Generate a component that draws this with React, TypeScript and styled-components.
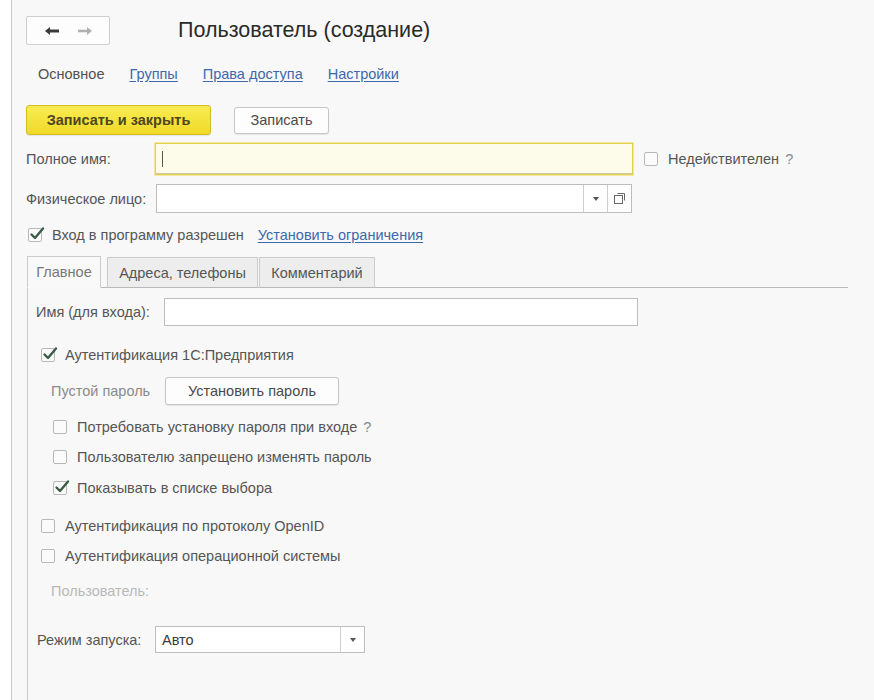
import React from "react";
import styled, { createGlobalStyle } from "styled-components";

const Global = createGlobalStyle`
  html, body { margin: 0; padding: 0; background: #ffffff; }
  body { font-family: "Liberation Sans", Arial, sans-serif; color: #4a4a4a; }
  * { box-sizing: border-box; }
`;

const Page = styled.div`
  padding-left: 11px;
  height: 700px;
  overflow: hidden;
`;

const Frame = styled.div`
  border-left: 1px solid #c9c9c9;
  background: #f8f8f8;
  height: 700px;
  padding: 16px 0 0 14px;
  display: flex;
  flex-direction: column;
`;

const Header = styled.div`
  display: flex;
  align-items: center;
  height: 29px;
`;

const NavBox = styled.div`
  width: 84px;
  height: 29px;
  border: 1px solid #cfcfcf;
  border-radius: 2px;
  background: #fdfdfd;
  display: flex;
  align-items: center;
  justify-content: space-around;
  padding: 0 8px;
`;

const Title = styled.h1`
  margin: 0 0 0 68px;
  font-size: 21.5px;
  font-weight: normal;
  color: #2a2a2a;
`;

const SectionNav = styled.nav`
  display: flex;
  gap: 25px;
  margin: 19px 0 0 12px;
  font-size: 14.5px;
  height: 20px;
  align-items: center;
`;

const NavItem = styled.span<{ $link?: boolean }>`
  color: ${(p) => (p.$link ? "#3d68ac" : "#505050")};
  text-decoration: ${(p) => (p.$link ? "underline" : "none")};
  text-underline-offset: 2px;
`;

const ButtonRow = styled.div`
  display: flex;
  align-items: center;
  gap: 23px;
  margin-top: 21px;
`;

const Button = styled.div<{ $primary?: boolean; $w: number; $h: number }>`
  width: ${(p) => p.$w}px;
  height: ${(p) => p.$h}px;
  flex: none;
  display: flex;
  align-items: center;
  justify-content: center;
  font-size: 14.5px;
  font-weight: ${(p) => (p.$primary ? "bold" : "normal")};
  border-radius: 3px;
  color: ${(p) => (p.$primary ? "#4e4620" : "#4a4a4a")};
  background: ${(p) => (p.$primary ? "linear-gradient(#f9ec52, #f0da28)" : "#fdfdfd")};
  border: 1px solid ${(p) => (p.$primary ? "#d3bd22" : "#c6c6c6")};
  box-shadow: 0 1px 1px rgba(0, 0, 0, 0.08);
`;

const FieldRow = styled.div<{ $mt: number; $ml?: number }>`
  display: flex;
  align-items: center;
  margin-top: ${(p) => p.$mt}px;
  margin-left: ${(p) => p.$ml ?? 0}px;
`;

const Label = styled.span<{ $w: number; $muted?: boolean }>`
  width: ${(p) => p.$w}px;
  flex: none;
  font-size: 14.5px;
  color: ${(p) => (p.$muted ? "#8a8a8a" : "#555555")};
  white-space: nowrap;
`;

const Input = styled.div<{ $w: number; $h: number; $focus?: boolean }>`
  width: ${(p) => p.$w}px;
  height: ${(p) => p.$h}px;
  flex: none;
  display: flex;
  align-items: center;
  background: ${(p) => (p.$focus ? "#fdfbea" : "#ffffff")};
  border: 1px solid ${(p) => (p.$focus ? "#e0cf50" : "#bdbdbd")};
  box-shadow: ${(p) => (p.$focus ? "0 0 0 1px #f3eaa0, inset 0 -1px 0 #cfc8a8" : "none")};
  font-size: 14.5px;
  color: #3a3a3a;
  padding-left: 6px;
`;

const Caret = styled.span`
  width: 1px;
  height: 16px;
  background: #555;
`;

const InputButton = styled.div<{ $w: number }>`
  margin-left: auto;
  width: ${(p) => p.$w}px;
  height: 100%;
  border-left: 1px solid #cfcfcf;
  display: flex;
  align-items: center;
  justify-content: center;
`;

const InputText = styled.span`
  flex: 1;
`;

const CheckItem = styled.div<{ $mt: number; $ml: number }>`
  display: flex;
  align-items: center;
  height: 16px;
  margin-top: ${(p) => p.$mt}px;
  margin-left: ${(p) => p.$ml}px;
  font-size: 14.5px;
  color: #555;
  white-space: nowrap;
`;

const Box = styled.span`
  width: 14px;
  height: 14px;
  flex: none;
  border: 1px solid #b8b8b8;
  border-radius: 2px;
  background: #fbfbfb;
  position: relative;
  margin-right: 10px;
`;

const CheckMark = styled.svg`
  position: absolute;
  left: 0px;
  top: -3px;
`;

const Help = styled.span`
  color: #8a8a8a;
  margin-left: 6px;
`;

const LinkText = styled.span`
  color: #3d68ac;
  text-decoration: underline;
  text-underline-offset: 2px;
  margin-left: 14px;
`;

const TabStrip = styled.div`
  display: flex;
  align-items: flex-end;
  margin-top: 12px;
  margin-left: 1px;
  height: 32px;
`;

const Tab = styled.div<{ $active?: boolean; $w: number; $ml?: number }>`
  width: ${(p) => p.$w}px;
  height: ${(p) => (p.$active ? 32 : 31)}px;
  margin-left: ${(p) => p.$ml ?? 0}px;
  display: flex;
  align-items: center;
  justify-content: center;
  font-size: 14.5px;
  color: ${(p) => (p.$active ? "#777" : "#555")};
  background: ${(p) => (p.$active ? "#f9f9f9" : "#ededed")};
  border: 1px solid #cbcbcb;
  border-bottom: ${(p) => (p.$active ? "1px solid #f9f9f9" : "1px solid #b9b9b9")};
  margin-bottom: -1px;
  position: relative;
  z-index: ${(p) => (p.$active ? 2 : 1)};
`;

const Panel = styled.div`
  margin-left: 1px;
  width: 821px;
  flex: 1;
  border-top: 1px solid #b9b9b9;
  border-left: 1px solid #c9c9c9;
  padding: 9px 0 0 8px;
  display: flex;
  flex-direction: column;
`;

const Faded = styled.span<{ $mt: number; $ml: number }>`
  height: 16px;
  margin-top: ${(p) => p.$mt}px;
  margin-left: ${(p) => p.$ml}px;
  font-size: 14.5px;
  color: #b9b9b9;
`;

function Check({ checked, text, mt, ml, children }: { checked?: boolean; text: string; mt: number; ml: number; children?: React.ReactNode }) {
  return (
    <CheckItem $mt={mt} $ml={ml}>
      <Box>
        {checked && (
          <CheckMark width="16" height="16" viewBox="0 0 16 16">
            <path d="M2.5 8.5 L6 12 L14 2.5" fill="none" stroke="#3b5d45" strokeWidth="2.4" strokeLinecap="round" strokeLinejoin="round" />
          </CheckMark>
        )}
      </Box>
      {text}
      {children}
    </CheckItem>
  );
}

const DropArrow = () => (
  <svg width="6" height="4" viewBox="0 0 6 4"><path d="M0 0 L6 0 L3 4 Z" fill="#555" /></svg>
);

export default function App() {
  return (
    <>
      <Global />
      <Page>
        <Frame>
          <Header>
            <NavBox>
              <svg width="16" height="10" viewBox="0 0 16 10">
                <path d="M1 5 L6 1 L6 3.6 L15 3.6 L15 6.4 L6 6.4 L6 9 Z" fill="#3a3a3a" />
              </svg>
              <svg width="16" height="10" viewBox="0 0 16 10">
                <path d="M15 5 L10 1 L10 3.8 L1 3.8 L1 6.2 L10 6.2 L10 9 Z" fill="#b0b0b0" />
              </svg>
            </NavBox>
            <Title>Пользователь (создание)</Title>
          </Header>

          <SectionNav>
            <NavItem>Основное</NavItem>
            <NavItem $link>Группы</NavItem>
            <NavItem $link>Права доступа</NavItem>
            <NavItem $link>Настройки</NavItem>
          </SectionNav>

          <ButtonRow>
            <Button $primary $w={185} $h={30}>Записать и закрыть</Button>
            <Button $w={95} $h={27}>Записать</Button>
          </ButtonRow>

          <FieldRow $mt={8}>
            <Label $w={129}>Полное имя:</Label>
            <Input $w={478} $h={32} $focus>
              <Caret />
            </Input>
            <Check text="Недействителен" mt={0} ml={11}>
              <Help>?</Help>
            </Check>
          </FieldRow>

          <FieldRow $mt={9}>
            <Label $w={130}>Физическое лицо:</Label>
            <Input $w={476} $h={29}>
              <InputText />
              <InputButton $w={24}>
                <DropArrow />
              </InputButton>
              <InputButton $w={24}>
                <svg width="13" height="13" viewBox="0 0 13 13">
                  <rect x="1.5" y="3.5" width="8" height="8" fill="none" stroke="#666" strokeWidth="1" />
                  <path d="M4.5 1.5 H11.5 V8.5" fill="none" stroke="#666" strokeWidth="1" />
                </svg>
              </InputButton>
            </Input>
          </FieldRow>

          <Check checked text="Вход в программу разрешен" mt={14} ml={2}>
            <LinkText>Установить ограничения</LinkText>
          </Check>

          <TabStrip>
            <Tab $active $w={74}>Главное</Tab>
            <Tab $w={151} $ml={6}>Адреса, телефоны</Tab>
            <Tab $w={116} $ml={1}>Комментарий</Tab>
          </TabStrip>

          <Panel>
            <FieldRow $mt={1}>
              <Label $w={128}>Имя (для входа):</Label>
              <Input $w={474} $h={28} />
            </FieldRow>

            <Check checked text="Аутентификация 1С:Предприятия" mt={21} ml={5} />

            <FieldRow $mt={14} $ml={15}>
              <Label $w={114} $muted>Пустой пароль</Label>
              <Button $w={174} $h={28}>Установить пароль</Button>
            </FieldRow>

            <Check text="Потребовать установку пароля при входе" mt={14} ml={17}>
              <Help>?</Help>
            </Check>
            <Check text="Пользователю запрещено изменять пароль" mt={14} ml={17} />
            <Check checked text="Показывать в списке выбора" mt={15} ml={17} />

            <Check text="Аутентификация по протоколу OpenID" mt={22} ml={5} />
            <Check text="Аутентификация операционной системы" mt={14} ml={5} />

            <Faded $mt={19} $ml={15}>Пользователь:</Faded>

            <FieldRow $mt={27} $ml={1}>
              <Label $w={118}>Режим запуска:</Label>
              <Input $w={210} $h={27}>
                <InputText>Авто</InputText>
                <InputButton $w={24}>
                  <DropArrow />
                </InputButton>
              </Input>
            </FieldRow>
          </Panel>
        </Frame>
      </Page>
    </>
  );
}
